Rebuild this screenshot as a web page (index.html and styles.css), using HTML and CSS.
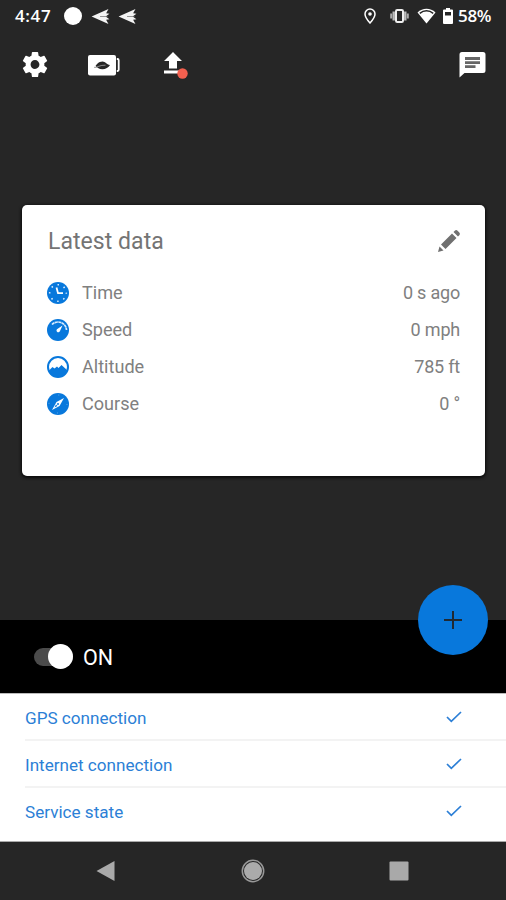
FILE: index.html
```html
<!DOCTYPE html>
<html lang="en">
<head>
<meta charset="utf-8">
<title>Tracker</title>
<link rel="stylesheet" href="styles.css">
</head>
<body>
<div class="screen">
  <header class="status">
    <span class="clock">4:47</span>
    <i class="dot"></i>
    <svg class="plane" viewBox="0 0 19 16"><path d="M0 8 18 0 15.500 4.500 19 5 15 8 19 11 15.500 11.500 18 16Z" fill="#f4f4f4"/><path d="M9 8h8" stroke="#777" stroke-width=".8"/></svg>
    <svg class="plane" viewBox="0 0 19 16"><path d="M0 8 18 0 15.500 4.500 19 5 15 8 19 11 15.500 11.500 18 16Z" fill="#f4f4f4"/><path d="M9 8h8" stroke="#777" stroke-width=".8"/></svg>
    <span class="spacer"></span>
    <svg class="pin" viewBox="0 0 12 16"><path d="M6 1a5 5 0 0 0-5 5c0 3.500 5 9 5 9s5-5.500 5-9a5 5 0 0 0-5-5Z" fill="none" stroke="#fff" stroke-width="1.500"/><circle cx="6" cy="6" r="1.800" fill="#fff"/></svg>
    <svg class="vibrate" viewBox="0 0 19 14"><rect x="6" y="1" width="7" height="12" rx="1.200" fill="none" stroke="#eee" stroke-width="2"/><path d="M3.700 2.500v9M15.300 2.500v9" stroke="#bbb" stroke-width="2.400"/><path d="M1.200 4.500v5M17.800 4.500v5" stroke="#aaa" stroke-width="2"/></svg>
    <svg class="wifi" viewBox="0 0 19 16"><path d="M9.500 15.500.5 4.500C5.500-.5 13.500-.5 18.500 4.500Z" fill="#fff"/><path d="M2.800 5.300c4-3.300 9.400-3.300 13.400 0" fill="none" stroke="#262626" stroke-width="1.500"/></svg>
    <svg class="battery" viewBox="0 0 10 16"><path d="M3 0h4v1.500h2q1 0 1 1V15q0 1-1 1H1q-1 0-1-1V2.500q0-1 1-1h2Z" fill="#fff"/><path d="M2 4h6v3.500H2Z" fill="#262626"/></svg>
    <span class="percent">58%</span>
  </header>
  <nav class="toolbar">
    <svg class="gear" viewBox="2 2 20 20"><path fill="#fff" d="M19.140 12.940c.040-.3.060-.610.060-.940s-.020-.640-.070-.940l2.030-1.580a.5.5 0 0 0 .120-.610l-1.920-3.320a.5.5 0 0 0-.590-.220l-2.390.960a7 7 0 0 0-1.620-.940L14.400 2.810A.5.5 0 0 0 13.920 2.400h-3.840a.5.5 0 0 0-.470.410L9.250 5.350a7 7 0 0 0-1.620.940l-2.390-.960a.5.5 0 0 0-.590.220L2.740 8.870a.5.500 0 0 0 .120.610l2.030 1.580a7 7 0 0 0 0 1.880l-2.030 1.580a.5.500 0 0 0-.120.610l1.920 3.320c.120.220.370.290.590.220l2.390-.960c.5.380 1.030.7 1.620.940l.360 2.540c.050.240.240.410.480.410h3.840c.240 0 .440-.170.470-.410l.360-2.540a7 7 0 0 0 1.620-.940l2.390.960c.220.080.470 0 .590-.220l1.920-3.320a.5.500 0 0 0-.120-.610ZM12 15.400a3.400 3.400 0 1 1 0-6.800 3.400 3.400 0 0 1 0 6.800Z"/></svg>
    <svg class="eco" viewBox="0 0 32 22"><rect x="0" y="1" width="28" height="20.500" rx="2" fill="#fff"/><path d="M28.800 5h.7q1.200 0 1.200 1.200v9.600q0 1.200-1.200 1.200h-.7" fill="none" stroke="#fff" stroke-width="1.800"/><path d="M7.500 12c1-1.500 3-4.500 7-4.500 3 0 4 3 7.500 3.500-2 4-8 5.500-12 3Z" fill="#262626"/><path d="M6 13.300q2.500.7 4-.8 4-1.500 7.500-1.300" fill="none" stroke="#999" stroke-width=".9"/></svg>
    <svg class="upload" viewBox="0 0 26 28"><path d="M10 0 19 9h-5v7.500H6V9H1ZM1 18.500h17v3H1Z" fill="#fff"/><circle cx="19.500" cy="21.500" r="5.200" fill="#f3604f"/></svg>
    <span class="spacer"></span>
    <svg class="chat" viewBox="0 0 26 26"><path d="M2.500 0h21Q26 0 26 2.500v16Q26 21 23.500 21H5L0 25.500V2.500Q0 0 2.500 0Z" fill="#fff"/><path d="M5.500 5h15v3h-15ZM5.500 9.300h15v2.700h-15ZM5.500 13.300h10.500v2.700H5.500Z" fill="#666"/></svg>
  </nav>
  <main class="content">
    <section class="card">
      <div class="card-head"><h1>Latest data</h1>
        <svg class="pencil" viewBox="0 0 22 22"><path d="m1.500 16.500 4 4L0 22ZM3 14.500 14 3.500l4.500 4.500L7.500 19ZM15.500 2l1.300-1.300q1.400-1.200 2.800 0l1.700 1.700q1.200 1.400 0 2.800L20 6.500Z" fill="#707070"/></svg>
      </div>
      <dl class="data">
        <div class="row"><svg viewBox="0 0 22 22"><circle cx="11" cy="11" r="11" fill="#0878dc"/><circle cx="11" cy="11" r="8.300" fill="none" stroke="#d9ecff" stroke-width="1.600" stroke-dasharray="1.500 5.020" stroke-dashoffset=".75"/><path d="M9.500 5.500 11 11.200h5" fill="none" stroke="#fff" stroke-width="1.800"/></svg><dt>Time</dt><dd>0 s ago</dd></div>
        <div class="row"><svg viewBox="0 0 22 22"><circle cx="11" cy="11" r="11" fill="#0878dc"/><path d="M5 5.500A8.500 8.500 0 0 1 19.500 11" fill="none" stroke="#d9ecff" stroke-width="1.700" stroke-dasharray="3 .4"/><path d="m15.500 6.500-2.500 5.500a1.800 1.800 0 1 1-2.300-2.300Z" fill="#fff"/></svg><dt>Speed</dt><dd>0 mph</dd></div>
        <div class="row"><svg viewBox="0 0 22 22"><circle cx="11" cy="11" r="10" fill="#fff" stroke="#0878dc" stroke-width="2"/><path d="M1.500 15 5.500 11l2 1.500L10 10.500l1.500 1.500L14.500 9l6 5.500Q17.500 21 11 21T1.500 15Z" fill="#0878dc"/></svg><dt>Altitude</dt><dd>785 ft</dd></div>
        <div class="row"><svg viewBox="0 0 22 22"><circle cx="11" cy="11" r="11" fill="#0878dc"/><circle cx="11" cy="11" r="9" fill="none" stroke="#65adeb" stroke-width="1" stroke-dasharray="1 13.140"/><path d="m17 5-4.500 8-7.500 4 4.500-8Z" fill="#fff"/><circle cx="11" cy="11" r="1" fill="#0878dc"/><path d="m7.500 14.500 1.500-3 1.500 1.500Z" fill="#0878dc"/></svg><dt>Course</dt><dd>0 °</dd></div>
      </dl>
    </section>
  </main>
  <section class="power">
    <span class="switch"><i></i></span><span class="on">ON</span>
    <button class="fab" aria-label="Add"><svg viewBox="0 0 18 18"><path d="M9 0v18M0 9h18" stroke="#202a34" stroke-width="2"/></svg></button>
  </section>
  <ul class="checks">
    <li><span>GPS connection</span><svg viewBox="0 0 16 12"><path d="m1 6 4.300 4.300L15 1" fill="none" stroke="#2c7fd6" stroke-width="1.700"/></svg></li>
    <li><span>Internet connection</span><svg viewBox="0 0 16 12"><path d="m1 6 4.300 4.300L15 1" fill="none" stroke="#2c7fd6" stroke-width="1.700"/></svg></li>
    <li><span>Service state</span><svg viewBox="0 0 16 12"><path d="m1 6 4.300 4.300L15 1" fill="none" stroke="#2c7fd6" stroke-width="1.700"/></svg></li>
  </ul>
  <footer class="nav">
    <svg viewBox="0 0 24 24"><path d="M2.500 12 20.500 2v20Z" fill="#a9a9a9"/></svg>
    <svg viewBox="0 0 24 24"><circle cx="12" cy="12" r="10.700" fill="none" stroke="#999" stroke-width="1.500"/><circle cx="12" cy="12" r="9" fill="#ababab"/></svg>
    <svg viewBox="0 0 24 24"><rect x="2.500" y="2.500" width="19" height="19" rx="1" fill="#a9a9a9"/></svg>
  </footer>
</div>
</body>
</html>
```
FILE: styles.css
```css
* { box-sizing: border-box; margin: 0; padding: 0; }
body { background: #262626; font-family: Roboto, "Liberation Sans", sans-serif; }
svg { display: block; flex: none; }
.screen { width: 506px; height: 900px; display: flex; flex-direction: column; background: #262626; overflow: hidden; }
.spacer { flex: 1; }

.status { height: 32px; flex: none; display: flex; align-items: center; padding: 0 14px 0 15px; color: #fff; font: 600 17px/32px "Open Sans", sans-serif; }
.clock { width: 49px; letter-spacing: 0.6px; }
.dot { width: 18px; height: 18px; border-radius: 50%; background: #fff; margin-right: 9px; }
.plane { width: 19px; height: 15px; margin-right: 8px; }
.pin { width: 12px; height: 16px; margin-right: 14px; }
.vibrate { width: 19px; height: 14px; margin-right: 8px; }
.wifi { width: 19px; height: 16px; margin-right: 7px; }
.battery { width: 10px; height: 16px; margin-right: 5px; }
.percent { width: 34px; font-size: 17px; letter-spacing: -0.3px; white-space: nowrap; }

.toolbar { height: 65px; flex: none; display: flex; align-items: center; padding: 0 20px 0 22px; }
.gear { width: 26px; height: 27px; margin-right: 40px; }
.eco { width: 32px; height: 22px; margin-right: 43px; }
.upload { width: 26px; height: 28px; margin-top: 3px; }
.chat { width: 27px; height: 26px; }

.content { flex: 1; padding: 108px 21px 0 22px; }
.card { height: 271px; padding: 20px 25px; background: #fff; border-radius: 5px; box-shadow: 0 1px 3px 1px #0c0c0c; }
.card-head { height: 32px; display: flex; align-items: center; justify-content: space-between; color: #747474; }
.card-head h1 { font-size: 23px; font-weight: 400; letter-spacing: 0.05px; padding-left: 1px; }
.pencil { width: 22px; height: 22px; }
.data { margin-top: 17px; }
.row { height: 37px; display: flex; align-items: center; font-size: 18.1px; color: #808080; }
.row svg { width: 22px; height: 22px; margin-right: 13px; }
.row dd { margin-left: auto; font-size: 18px; letter-spacing: -0.2px; }

.power { position: relative; height: 73px; flex: none; display: flex; align-items: center; padding-left: 34px; background: #000; color: #fff; }
.switch { width: 39px; height: 18px; display: flex; align-items: center; justify-content: flex-end; background: #4b4b4b; border-radius: 9px; }
.switch i { flex: none; width: 25px; height: 25px; border-radius: 50%; background: #fff; }
.on { margin-left: 10px; padding-top: 2px; font-size: 21.5px; }
.fab { position: absolute; right: 18px; top: -35px; width: 70px; height: 70px; border: 0; border-radius: 50%; background: #0878dc; display: flex; align-items: center; justify-content: center; }
.fab svg { width: 18px; height: 18px; }

.checks { height: 149px; flex: none; list-style: none; background: #fff; border-top: 1px solid #bbb; border-bottom: 1px solid #aaa; padding-left: 25px; }
.checks li { height: 47px; display: flex; align-items: center; justify-content: space-between; padding-right: 44px; border-bottom: 2px solid #f3f3f3; font-size: 17.1px; color: #2c7fd6; }
.checks span { padding-top: 3px; }
.checks li:last-child { border-bottom-color: transparent; }
.checks svg { width: 16px; height: 12px; }

.nav { height: 58px; flex: none; display: flex; align-items: center; justify-content: space-between; padding: 0 95px 0 94px; }
.nav svg { width: 24px; height: 24px; }
```
